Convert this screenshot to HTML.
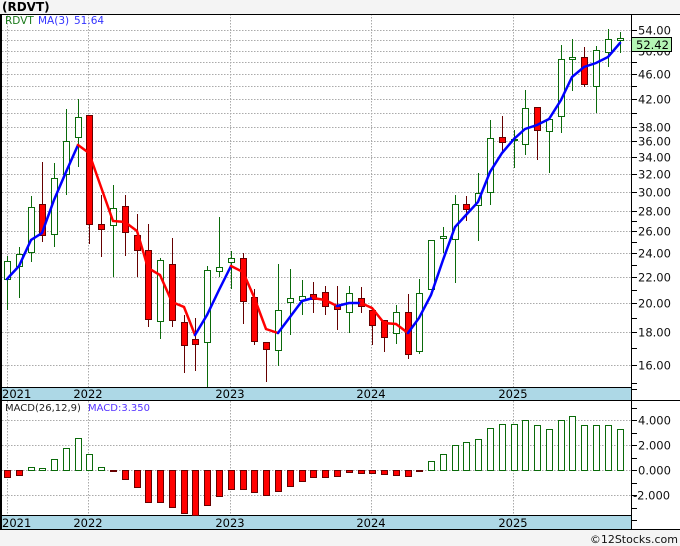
<!DOCTYPE html>
<html><head><meta charset="utf-8"><style>
html,body{margin:0;padding:0;background:#f4f4f4;width:680px;height:546px;overflow:hidden}
svg{display:block}
text{font-family:"DejaVu Sans","Liberation Sans",sans-serif}
</style></head><body>
<svg width="680" height="546" viewBox="0 0 680 546" xmlns="http://www.w3.org/2000/svg">
<rect x="0" y="0" width="680" height="546" fill="#f4f4f4"/>
<text x="2" y="11" font-size="12" font-weight="bold" fill="#000">(RDVT)</text>
<!-- main panel -->
<rect x="1" y="14" width="679" height="516" fill="#fff"/>
<g stroke="#aaa" stroke-width="1" stroke-dasharray="1.5,1.5" fill="none">
<line x1="2" x2="631" y1="30.5" y2="30.5"/><line x1="2" x2="631" y1="40.5" y2="40.5"/><line x1="2" x2="631" y1="51.5" y2="51.5"/><line x1="2" x2="631" y1="62.5" y2="62.5"/><line x1="2" x2="631" y1="74.5" y2="74.5"/><line x1="2" x2="631" y1="86.5" y2="86.5"/><line x1="2" x2="631" y1="99.5" y2="99.5"/><line x1="2" x2="631" y1="113.5" y2="113.5"/><line x1="2" x2="631" y1="127.5" y2="127.5"/><line x1="2" x2="631" y1="141.5" y2="141.5"/><line x1="2" x2="631" y1="157.5" y2="157.5"/><line x1="2" x2="631" y1="174.5" y2="174.5"/><line x1="2" x2="631" y1="192.5" y2="192.5"/><line x1="2" x2="631" y1="211.5" y2="211.5"/><line x1="2" x2="631" y1="231.5" y2="231.5"/><line x1="2" x2="631" y1="253.5" y2="253.5"/><line x1="2" x2="631" y1="277.5" y2="277.5"/><line x1="2" x2="631" y1="303.5" y2="303.5"/><line x1="2" x2="631" y1="332.5" y2="332.5"/><line x1="2" x2="631" y1="365.5" y2="365.5"/>
<line x1="7.5" x2="7.5" y1="14" y2="387"/><line x1="88.5" x2="88.5" y1="14" y2="387"/><line x1="230.5" x2="230.5" y1="14" y2="387"/><line x1="371.5" x2="371.5" y1="14" y2="387"/><line x1="513.5" x2="513.5" y1="14" y2="387"/>
<line x1="2" x2="631" y1="420.5" y2="420.5"/><line x1="2" x2="631" y1="445.5" y2="445.5"/><line x1="2" x2="631" y1="470.5" y2="470.5"/><line x1="2" x2="631" y1="495.5" y2="495.5"/>
<line x1="7.5" x2="7.5" y1="401" y2="515"/><line x1="88.5" x2="88.5" y1="401" y2="515"/><line x1="230.5" x2="230.5" y1="401" y2="515"/><line x1="371.5" x2="371.5" y1="401" y2="515"/><line x1="513.5" x2="513.5" y1="401" y2="515"/>
</g>
<text x="5" y="24" font-size="10.5" fill="#1a7a1a">RDVT</text>
<text x="38" y="24" font-size="10.5" fill="#3333ff">MA(3)</text>
<text x="74" y="24" font-size="10.5" fill="#3333ff">51.64</text>
<!-- candles -->
<g stroke-width="1" id="c"></g>
<g fill="none" stroke-width="1">
<g stroke="#0a6a0a">
<line x1="7.5" x2="7.5" y1="256" y2="310"/><rect x="4.5" y="261.5" width="6" height="18" fill="#fff"/>
<line x1="19.5" x2="19.5" y1="247" y2="298"/><rect x="16.5" y="254.5" width="6" height="12" fill="#fff"/>
<line x1="31.5" x2="31.5" y1="196" y2="262"/><rect x="28.5" y="207.5" width="6" height="45" fill="#fff"/>
<line x1="54.5" x2="54.5" y1="163" y2="247"/><rect x="51.5" y="178.5" width="6" height="56" fill="#fff"/>
<line x1="66.5" x2="66.5" y1="109" y2="195"/><rect x="63.5" y="141.5" width="6" height="33" fill="#fff"/>
<line x1="78.5" x2="78.5" y1="99" y2="167"/><rect x="75.5" y="117.5" width="6" height="20" fill="#fff"/>
<line x1="113.5" x2="113.5" y1="185" y2="277"/><rect x="110.5" y="208.5" width="6" height="17" fill="#fff"/>
<line x1="160.5" x2="160.5" y1="258" y2="339"/><rect x="157.5" y="260.5" width="6" height="61" fill="#fff"/>
<line x1="207.5" x2="207.5" y1="266" y2="387"/><rect x="204.5" y="270.5" width="6" height="72" fill="#fff"/>
<line x1="219.5" x2="219.5" y1="217" y2="277"/><rect x="216.5" y="267.5" width="6" height="4" fill="#fff"/>
<line x1="231.5" x2="231.5" y1="251" y2="289"/><rect x="228.5" y="258.5" width="6" height="4" fill="#fff"/>
<line x1="278.5" x2="278.5" y1="264" y2="366"/><rect x="275.5" y="310.5" width="6" height="40" fill="#fff"/>
<line x1="290.5" x2="290.5" y1="269" y2="335"/><rect x="287.5" y="298.5" width="6" height="4" fill="#fff"/>
<line x1="302.5" x2="302.5" y1="280" y2="315"/><rect x="299.5" y="296.5" width="6" height="4" fill="#fff"/>
<line x1="349.5" x2="349.5" y1="286" y2="333"/><rect x="346.5" y="293.5" width="6" height="19" fill="#fff"/>
<line x1="396.5" x2="396.5" y1="305" y2="344"/><rect x="393.5" y="312.5" width="6" height="21" fill="#fff"/>
<line x1="419.5" x2="419.5" y1="279" y2="354"/><rect x="416.5" y="293.5" width="6" height="58" fill="#fff"/>
<rect x="428.5" y="240.5" width="6" height="49" fill="#fff"/>
<line x1="443.5" x2="443.5" y1="227" y2="253"/><rect x="440.5" y="236.5" width="6" height="2" fill="#fff"/>
<line x1="455.5" x2="455.5" y1="195" y2="283"/><rect x="452.5" y="204.5" width="6" height="35" fill="#fff"/>
<line x1="478.5" x2="478.5" y1="173" y2="241"/><rect x="475.5" y="193.5" width="6" height="12" fill="#fff"/>
<line x1="490.5" x2="490.5" y1="120" y2="205"/><rect x="487.5" y="138.5" width="6" height="54" fill="#fff"/>
<line x1="514.5" x2="514.5" y1="130" y2="168"/><rect x="511.5" y="139.5" width="6" height="1" fill="#fff"/>
<line x1="525.5" x2="525.5" y1="90" y2="155"/><rect x="522.5" y="108.5" width="6" height="36" fill="#fff"/>
<line x1="549.5" x2="549.5" y1="117" y2="173"/><rect x="546.5" y="119.5" width="6" height="12" fill="#fff"/>
<line x1="561.5" x2="561.5" y1="45" y2="133"/><rect x="558.5" y="59.5" width="6" height="57" fill="#fff"/>
<line x1="572.5" x2="572.5" y1="39" y2="91"/><rect x="569.5" y="57.5" width="6" height="2" fill="#fff"/>
<line x1="596.5" x2="596.5" y1="46" y2="113"/><rect x="593.5" y="50.5" width="6" height="36" fill="#fff"/>
<line x1="608.5" x2="608.5" y1="29" y2="67"/><rect x="605.5" y="39.5" width="6" height="13" fill="#fff"/>
<line x1="620.5" x2="620.5" y1="32" y2="53"/><rect x="617.5" y="38.5" width="6" height="2" fill="#fff"/>
</g>
<g stroke="#660000">
<line x1="42.5" x2="42.5" y1="162" y2="242"/><rect x="39.5" y="204.5" width="6" height="31" fill="#f00"/>
<line x1="89.5" x2="89.5" y1="115" y2="244"/><rect x="86.5" y="115.5" width="6" height="109" fill="#f00"/>
<line x1="101.5" x2="101.5" y1="195" y2="257"/><rect x="98.5" y="224.5" width="6" height="5" fill="#f00"/>
<line x1="125.5" x2="125.5" y1="195" y2="256"/><rect x="122.5" y="206.5" width="6" height="26" fill="#f00"/>
<line x1="137.5" x2="137.5" y1="214" y2="277"/><rect x="134.5" y="235.5" width="6" height="15" fill="#f00"/>
<line x1="148.5" x2="148.5" y1="224" y2="327"/><rect x="145.5" y="250.5" width="6" height="69" fill="#f00"/>
<line x1="172.5" x2="172.5" y1="238" y2="327"/><rect x="169.5" y="264.5" width="6" height="56" fill="#f00"/>
<line x1="184.5" x2="184.5" y1="315" y2="373"/><rect x="181.5" y="322.5" width="6" height="23" fill="#f00"/>
<line x1="195.5" x2="195.5" y1="318" y2="371"/><rect x="192.5" y="339.5" width="6" height="5" fill="#f00"/>
<line x1="243.5" x2="243.5" y1="253" y2="324"/><rect x="240.5" y="258.5" width="6" height="43" fill="#f00"/>
<line x1="254.5" x2="254.5" y1="289" y2="345"/><rect x="251.5" y="297.5" width="6" height="44" fill="#f00"/>
<line x1="266.5" x2="266.5" y1="342" y2="382"/><rect x="263.5" y="342.5" width="6" height="7" fill="#f00"/>
<line x1="313.5" x2="313.5" y1="282" y2="313"/><rect x="310.5" y="294.5" width="6" height="5" fill="#f00"/>
<line x1="325.5" x2="325.5" y1="286" y2="315"/><rect x="322.5" y="292.5" width="6" height="14" fill="#f00"/>
<line x1="337.5" x2="337.5" y1="286" y2="330"/><rect x="334.5" y="306.5" width="6" height="3" fill="#f00"/>
<line x1="361.5" x2="361.5" y1="287" y2="313"/><rect x="358.5" y="298.5" width="6" height="8" fill="#f00"/>
<line x1="372.5" x2="372.5" y1="310" y2="345"/><rect x="369.5" y="310.5" width="6" height="15" fill="#f00"/>
<line x1="384.5" x2="384.5" y1="320" y2="352"/><rect x="381.5" y="320.5" width="6" height="17" fill="#f00"/>
<line x1="408.5" x2="408.5" y1="294" y2="359"/><rect x="405.5" y="312.5" width="6" height="42" fill="#f00"/>
<line x1="466.5" x2="466.5" y1="196" y2="221"/><rect x="463.5" y="204.5" width="6" height="5" fill="#f00"/>
<line x1="502.5" x2="502.5" y1="116" y2="151"/><rect x="499.5" y="137.5" width="6" height="5" fill="#f00"/>
<line x1="537.5" x2="537.5" y1="107" y2="160"/><rect x="534.5" y="107.5" width="6" height="23" fill="#f00"/>
<line x1="584.5" x2="584.5" y1="47" y2="87"/><rect x="581.5" y="57.5" width="6" height="27" fill="#f00"/>
</g>
</g>
<!-- MA line -->
<g stroke-width="2.5" stroke-linecap="round" fill="none">
<polyline stroke="#0000ff" points="7,279 19,266 31,240 42,233 54,200 66,172 78,145"/>
<polyline stroke="#ff0000" points="78,145 89,153 101,187 113,221 125,222 137,231 148,268 160,275 172,302 184,307 195,335"/>
<polyline stroke="#0000ff" points="195,335 207,315 219,290 231,266"/>
<polyline stroke="#ff0000" points="231,266 243,272 254,297 266,329 278,333"/>
<polyline stroke="#0000ff" points="278,333 290,317 302,301 313,298"/>
<polyline stroke="#ff0000" points="313,298 325,300 337,306"/>
<polyline stroke="#0000ff" points="337,306 349,303 361,303"/>
<polyline stroke="#ff0000" points="361,303 372,308 384,323 396,324 408,333"/>
<polyline stroke="#0000ff" points="408,333 419,318 431,295 443,260 455,227 466,215 478,202 490,172 502,153 514,139 525,129 537,125 549,119 561,100 572,77 584,67 596,63 608,57 620,43"/>
</g>
<!-- bands -->
<rect x="1" y="387" width="630" height="13" fill="#add8e6"/>
<line x1="1" x2="631" y1="387.5" y2="387.5" stroke="#000"/>
<line x1="1" x2="680" y1="400.5" y2="400.5" stroke="#000"/>
<rect x="1" y="515" width="630" height="14" fill="#add8e6"/>
<line x1="1" x2="631" y1="515.5" y2="515.5" stroke="#000"/>
<line x1="1" x2="680" y1="529.5" y2="529.5" stroke="#000"/>
<g font-size="11.5" fill="#000">
<text x="2" y="398">2021</text><text x="88" y="398" text-anchor="middle">2022</text><text x="230" y="398" text-anchor="middle">2023</text><text x="371" y="398" text-anchor="middle">2024</text><text x="513" y="398" text-anchor="middle">2025</text>
<text x="2" y="527">2021</text><text x="88" y="527" text-anchor="middle">2022</text><text x="230" y="527" text-anchor="middle">2023</text><text x="371" y="527" text-anchor="middle">2024</text><text x="513" y="527" text-anchor="middle">2025</text>
</g>
<!-- MACD -->
<text x="5" y="411" font-size="10" fill="#222">MACD(26,12,9)</text>
<text x="88" y="411" font-size="10" fill="#5533ff">MACD:3.350</text>
<g stroke="#0a6a0a" fill="#fff">
<rect x="28.5" y="467.5" width="6" height="3"/><rect x="39.5" y="468.5" width="6" height="2"/><rect x="51.5" y="459.5" width="6" height="11"/><rect x="63.5" y="448.5" width="6" height="22"/><rect x="75.5" y="438.5" width="6" height="32"/><rect x="86.5" y="454.5" width="6" height="16"/><rect x="98.5" y="467.5" width="6" height="3"/>
<rect x="428.5" y="461.5" width="6" height="9"/><rect x="440.5" y="454.5" width="6" height="16"/><rect x="452.5" y="445.5" width="6" height="25"/><rect x="463.5" y="442.5" width="6" height="28"/><rect x="475.5" y="439.5" width="6" height="31"/><rect x="487.5" y="428.5" width="6" height="42"/><rect x="499.5" y="424.5" width="6" height="46"/><rect x="511.5" y="424.5" width="6" height="46"/><rect x="522.5" y="420.5" width="6" height="50"/><rect x="534.5" y="425.5" width="6" height="45"/><rect x="546.5" y="429.5" width="6" height="41"/><rect x="558.5" y="420.5" width="6" height="50"/><rect x="569.5" y="416.5" width="6" height="54"/><rect x="581.5" y="425.5" width="6" height="45"/><rect x="593.5" y="425.5" width="6" height="45"/><rect x="605.5" y="425.5" width="6" height="45"/><rect x="617.5" y="429.5" width="6" height="41"/>
</g>
<g stroke="#660000" fill="#f00">
<rect x="4.5" y="470.5" width="6" height="7"/><rect x="16.5" y="470.5" width="6" height="5"/><rect x="110.5" y="470.5" width="6" height="1"/><rect x="122.5" y="470.5" width="6" height="9"/><rect x="134.5" y="470.5" width="6" height="17"/><rect x="145.5" y="470.5" width="6" height="32"/><rect x="157.5" y="470.5" width="6" height="32"/><rect x="169.5" y="470.5" width="6" height="37"/><rect x="181.5" y="470.5" width="6" height="43"/><rect x="192.5" y="470.5" width="6" height="45"/><rect x="204.5" y="470.5" width="6" height="35"/><rect x="216.5" y="470.5" width="6" height="26"/><rect x="228.5" y="470.5" width="6" height="19"/><rect x="240.5" y="470.5" width="6" height="19"/><rect x="251.5" y="470.5" width="6" height="22"/><rect x="263.5" y="470.5" width="6" height="25"/><rect x="275.5" y="470.5" width="6" height="21"/><rect x="287.5" y="470.5" width="6" height="16"/><rect x="299.5" y="470.5" width="6" height="11"/><rect x="310.5" y="470.5" width="6" height="7"/><rect x="322.5" y="470.5" width="6" height="7"/><rect x="334.5" y="470.5" width="6" height="6"/><rect x="346.5" y="470.5" width="6" height="2"/><rect x="358.5" y="470.5" width="6" height="3"/><rect x="369.5" y="470.5" width="6" height="3"/><rect x="381.5" y="470.5" width="6" height="4"/><rect x="393.5" y="470.5" width="6" height="5"/><rect x="405.5" y="470.5" width="6" height="6"/><rect x="416.5" y="470.5" width="6" height="1"/>
</g>
<!-- borders -->
<line x1="1" x2="680" y1="14.5" y2="14.5" stroke="#000"/>
<rect x="0" y="14" width="2" height="516" fill="#000"/>
<line x1="631.5" x2="631.5" y1="14" y2="530" stroke="#000"/>
<!-- right axis -->
<g stroke="#000">
<line x1="632" x2="637" y1="30.5" y2="30.5"/><line x1="632" x2="637" y1="40.5" y2="40.5"/><line x1="632" x2="637" y1="51.5" y2="51.5"/><line x1="632" x2="637" y1="62.5" y2="62.5"/><line x1="632" x2="637" y1="74.5" y2="74.5"/><line x1="632" x2="637" y1="86.5" y2="86.5"/><line x1="632" x2="637" y1="99.5" y2="99.5"/><line x1="632" x2="637" y1="113.5" y2="113.5"/><line x1="632" x2="637" y1="127.5" y2="127.5"/><line x1="632" x2="637" y1="141.5" y2="141.5"/><line x1="632" x2="637" y1="157.5" y2="157.5"/><line x1="632" x2="637" y1="174.5" y2="174.5"/><line x1="632" x2="637" y1="192.5" y2="192.5"/><line x1="632" x2="637" y1="211.5" y2="211.5"/><line x1="632" x2="637" y1="221.5" y2="221.5"/><line x1="632" x2="637" y1="231.5" y2="231.5"/><line x1="632" x2="637" y1="242.5" y2="242.5"/><line x1="632" x2="637" y1="253.5" y2="253.5"/><line x1="632" x2="637" y1="265.5" y2="265.5"/><line x1="632" x2="637" y1="277.5" y2="277.5"/><line x1="632" x2="637" y1="290.5" y2="290.5"/><line x1="632" x2="637" y1="303.5" y2="303.5"/><line x1="632" x2="637" y1="318.5" y2="318.5"/><line x1="632" x2="637" y1="332.5" y2="332.5"/><line x1="632" x2="637" y1="348.5" y2="348.5"/><line x1="632" x2="637" y1="365.5" y2="365.5"/><line x1="632" x2="637" y1="383.5" y2="383.5"/><line x1="632" x2="637" y1="389.5" y2="389.5"/>
<line x1="632" x2="637" y1="408.5" y2="408.5"/><line x1="632" x2="637" y1="420.5" y2="420.5"/><line x1="632" x2="637" y1="433.5" y2="433.5"/><line x1="632" x2="637" y1="445.5" y2="445.5"/><line x1="632" x2="637" y1="458.5" y2="458.5"/><line x1="632" x2="637" y1="470.5" y2="470.5"/><line x1="632" x2="637" y1="483.5" y2="483.5"/><line x1="632" x2="637" y1="495.5" y2="495.5"/><line x1="632" x2="637" y1="508.5" y2="508.5"/><line x1="632" x2="637" y1="520.5" y2="520.5"/>
</g>
<g font-size="11.5" fill="#111">
<text x="638" y="34.5">54.00</text><text x="638" y="55.5">50.00</text><text x="638" y="78.5">46.00</text><text x="638" y="103.5">42.00</text><text x="638" y="131.5">38.00</text><text x="638" y="145.5">36.00</text><text x="638" y="161.5">34.00</text><text x="638" y="178.5">32.00</text><text x="638" y="196.5">30.00</text><text x="638" y="215.5">28.00</text><text x="638" y="235.5">26.00</text><text x="638" y="257.5">24.00</text><text x="638" y="281.5">22.00</text><text x="638" y="307.5">20.00</text><text x="638" y="336.5">18.00</text><text x="638" y="369.5">16.00</text>
<text x="638" y="424.5">4.000</text><text x="638" y="449.5">2.000</text><text x="638" y="474.5">0.000</text><text x="633" y="499.5">-2.000</text>
</g>
<rect x="631.5" y="37.5" width="40" height="14" fill="#b4f5b4" stroke="#000"/>
<text x="636" y="49" font-size="11.5" fill="#000">52.42</text>
<text x="678" y="543" font-size="11" fill="#111" text-anchor="end">©12Stocks.com</text>
</svg>
</body></html>
